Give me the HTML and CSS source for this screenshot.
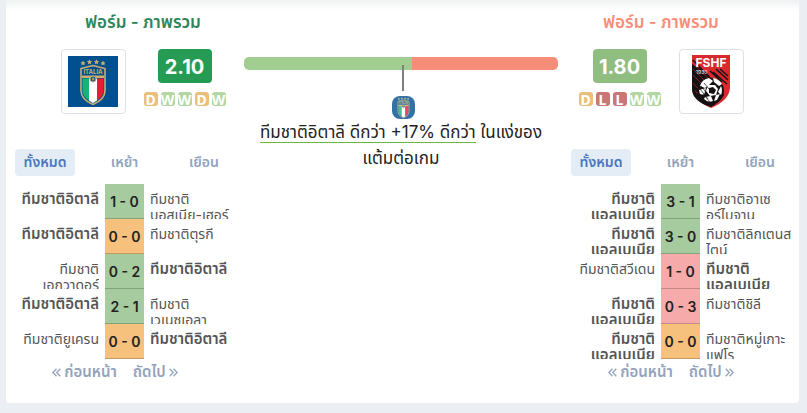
FILE: index.html
```html
<!DOCTYPE html>
<html lang="th">
<head>
    <meta charset="UTF-8">
    <meta name="viewport" content="width=device-width, initial-scale=1.0">
    <title>ฟอร์ม - ภาพรวม</title>
    <link rel="stylesheet" href="styles.css">
</head>
<body>

    <!-- Shared drawings -->
    <svg class="sprite" aria-hidden="true">
        <symbol id="italy" viewBox="0 0 50 50">
            <path d="M13 12 25 9l12 3v22q0 9-12 14Q13 43 13 34z" fill="#00508f" stroke="#c9ae6e" stroke-width="1.6"/>
            <path d="M14.500 22H21v22q-6.500-4-6.500-10z" fill="#14b573"/>
            <path d="M21 22h8v22l-4 2.500-4-2.500z" fill="#fff"/>
            <path d="M29 22h6.500v12q0 6-6.500 10z" fill="#e51d35"/>
            <path d="M14 19h22v2.500H14z" fill="#c9ae6e"/>
            <circle cx="25" cy="22.500" r="3" fill="#17548a" stroke="#c9ae6e"/>
            <path d="M24 22.500h2.500m-1.500-1.500v3" stroke="#c9ae6e"/>
            <text x="25" y="17.500" text-anchor="middle" class="italy-name">ITALIA</text>
            <g fill="#c9ae6e">
                <path id="star" d="m15 4 .8 1.700 1.800.2-1.300 1.300.3 1.800-1.600-.9-1.600.9.300-1.800-1.300-1.300 1.800-.2z"/>
                <use href="#star" x="6.500" y="-1.200"/>
                <use href="#star" x="13.500" y="-1.200"/>
                <use href="#star" x="20"/>
            </g>
        </symbol>
        <symbol id="prev" viewBox="0 0 9 9">
            <path d="M4.500.8.9 4.500l3.600 3.700M8.300.8 4.700 4.500l3.600 3.700" fill="none" stroke="currentColor" stroke-width="1.300"/>
        </symbol>
        <symbol id="next" viewBox="0 0 9 9">
            <path d="m.7.8 3.600 3.700L.7 8.200M4.500.8l3.600 3.700-3.600 3.700" fill="none" stroke="currentColor" stroke-width="1.300"/>
        </symbol>
    </svg>

    <main class="card">
        <section class="team">
            <div class="overview home">
                <h2 class="title">ฟอร์ม - ภาพรวม</h2>
                <div class="summary">
                    <div class="crest">
                        <svg class="crest-italy" viewBox="0 0 50 50" role="img" aria-label="ทีมชาติอิตาลี"><use href="#italy"/></svg>
                    </div>
                    <div class="form">
                        <div class="rating high">2.10</div>
                        <div class="results">
                            <span class="result d">D</span><span class="result w">W</span><span class="result w">W</span><span class="result d">D</span><span class="result w">W</span>
                        </div>
                    </div>
                </div>
            </div>
            <div class="tabs">
                <button class="tab active">ทั้งหมด</button>
                <button class="tab">เหย้า</button>
                <button class="tab">เยือน</button>
            </div>
            <table class="matches">
                <tr><td class="name left"><div><b>ทีมชาติอิตาลี</b></div></td><td class="score win">1 - 0</td><td class="name"><div>ทีมชาติ<br>บอสเนีย-เฮอร์</div></td></tr>
                <tr><td class="name left"><div><b>ทีมชาติอิตาลี</b></div></td><td class="score draw">0 - 0</td><td class="name"><div>ทีมชาติตุรกี</div></td></tr>
                <tr><td class="name left"><div>ทีมชาติ<br>เอกวาดอร์</div></td><td class="score win">0 - 2</td><td class="name"><div><b>ทีมชาติอิตาลี</b></div></td></tr>
                <tr><td class="name left"><div><b>ทีมชาติอิตาลี</b></div></td><td class="score win">2 - 1</td><td class="name"><div>ทีมชาติ<br>เวเนซุเอลา</div></td></tr>
                <tr><td class="name left"><div>ทีมชาติยูเครน</div></td><td class="score draw">0 - 0</td><td class="name"><div><b>ทีมชาติอิตาลี</b></div></td></tr>
            </table>
            <div class="pager">
                <button class="page"><svg class="chevron"><use href="#prev"/></svg>ก่อนหน้า</button>
                <button class="page">ถัดไป<svg class="chevron"><use href="#next"/></svg></button>
            </div>
        </section>

        <section class="compare">
            <div class="bar"><div class="bar-home"></div><div class="bar-away"></div></div>
            <div class="marker">
                <div class="line"></div>
                <svg class="marker-crest" viewBox="0 0 50 50" aria-hidden="true"><use href="#italy"/></svg>
            </div>
            <p class="verdict"><span class="better">ทีมชาติอิตาลี ดีกว่า +17% ดีกว่า</span> ในแง่ของ<br>แต้มต่อเกม</p>
        </section>

        <section class="team">
            <div class="overview away">
                <h2 class="title">ฟอร์ม - ภาพรวม</h2>
                <div class="summary">
                    <div class="form">
                        <div class="rating medium">1.80</div>
                        <div class="results">
                            <span class="result d">D</span><span class="result l">L</span><span class="result l">L</span><span class="result w">W</span><span class="result w">W</span>
                        </div>
                    </div>
                    <div class="crest">
                        <svg class="crest-albania" viewBox="0 0 38 54" role="img" aria-label="ทีมชาติแอลเบเนีย">
                            <path d="M0 0h38v32q0 13-19 21Q0 45 0 32z" fill="#d9292e"/>
                            <path d="M0 16v18q0 12 19 18 8-4 13-12L14 17 0 9z" fill="#151012"/>
                            <path d="m1 5 18 19M0 11l16 15M21 17l14 12M24 14l12 11M28 14l8 7M18 16l12 11" stroke="#151012" stroke-width="1.400"/>
                            <path d="m2 10 15 14M1 20l10 10M1 14l12 12M1 28l14 15M3 36l13 11" stroke="#d9292e" stroke-width=".6"/>
                            <circle cx="19" cy="36" r="13" fill="#151012"/>
                            <path d="M8 31q2-7 9-8l4 3-5 5-3 2zM21 23q6 1 9 6l-3 2-5-4zM29 31q2 4 0 9l-3-3zM14 33l-2 7-4-1-1-4zM13 42l6-1 2 5q-5 2-9-2zM24 40l4-1-3 6-3 1zM16 30h7l3 4-2 6-6 1-4-5z" fill="#fff"/>
                            <path d="m17 33 4-1 3 3-2 4-5-1z" fill="#151012"/>
                            <path d="m8 34 8 10M9 31l8 10M12 28l5 6M11 39l7 8" stroke="#151012" stroke-width=".7"/>
                            <text x="19" y="12" text-anchor="middle" class="fshf">FSHF</text>
                            <text x="4" y="19" class="year">1930</text>
                        </svg>
                    </div>
                </div>
            </div>
            <div class="tabs">
                <button class="tab active">ทั้งหมด</button>
                <button class="tab">เหย้า</button>
                <button class="tab">เยือน</button>
            </div>
            <table class="matches">
                <tr><td class="name left"><div><b>ทีมชาติ<br>แอลเบเนีย</b></div></td><td class="score win">3 - 1</td><td class="name"><div>ทีมชาติอาเซ<br>อร์ไบจาน</div></td></tr>
                <tr><td class="name left"><div><b>ทีมชาติ<br>แอลเบเนีย</b></div></td><td class="score win">3 - 0</td><td class="name"><div>ทีมชาติลิกเตนส<br>ไตน์</div></td></tr>
                <tr><td class="name left"><div>ทีมชาติสวีเดน</div></td><td class="score loss">1 - 0</td><td class="name"><div><b>ทีมชาติ<br>แอลเบเนีย</b></div></td></tr>
                <tr><td class="name left"><div><b>ทีมชาติ<br>แอลเบเนีย</b></div></td><td class="score loss">0 - 3</td><td class="name"><div>ทีมชาติชิลี</div></td></tr>
                <tr><td class="name left"><div><b>ทีมชาติ<br>แอลเบเนีย</b></div></td><td class="score draw">0 - 0</td><td class="name"><div>ทีมชาติหมู่เกาะ<br>แฟโร</div></td></tr>
            </table>
            <div class="pager">
                <button class="page"><svg class="chevron"><use href="#prev"/></svg>ก่อนหน้า</button>
                <button class="page">ถัดไป<svg class="chevron"><use href="#next"/></svg></button>
            </div>
        </section>
    </main>

</body>
</html>
```
FILE: styles.css
```css
* {
    box-sizing: border-box;
}

body {
    margin: 0;
    padding: 0 8px 9px 6px;
    background: #ebeff3;
    color: #222;
    font-family: Inter, "Noto Sans Thai", "Noto Sans", sans-serif;
}

.sprite {
    display: none;
}

.card {
    display: grid;
    grid-template-columns: 228fr 328fr 228fr;
    padding: 0 0 20px 9px;
    background: linear-gradient(#eff1f2, #fff 10px);
    border-radius: 0 0 4px 4px;
}

.overview.home {
    padding-left: 28px;
    color: #2d8659;
}

.overview.away {
    padding-right: 48px;
    color: #f78d78;
}

.title {
    margin: 11px 0 0;
    height: 38px;
    font-size: 17px;
    line-height: 22px;
    font-weight: 600;
    text-align: center;
}

.summary {
    display: flex;
    justify-content: center;
    gap: 18px;
}

.crest {
    display: flex;
    align-items: center;
    justify-content: center;
    width: 65px;
    height: 65px;
    border: 1px solid #dfe0e7;
    border-radius: 4px;
}

.crest-italy {
    width: 50px;
    height: 51px;
    background: #00508f;
}

.crest-albania {
    width: 38px;
    height: 54px;
}

.italy-name {
    font-size: 6px;
    font-weight: 700;
    fill: #c9ae6e;
}

.fshf {
    font-size: 12px;
    font-weight: 700;
    fill: #fff;
}

.year {
    font-size: 5px;
    fill: #fff;
}

.form {
    display: flex;
    flex-direction: column;
    align-items: center;
}

.rating {
    width: 54px;
    height: 34px;
    border-radius: 4px;
    color: #fff;
    font-size: 20px;
    line-height: 36px;
    font-weight: 700;
    text-align: center;
}

.rating.high {
    background: #259b54;
}

.rating.medium {
    background: #90bd80;
}

.results {
    display: flex;
    gap: 3px;
    margin-top: 9px;
}

.result {
    display: flex;
    justify-content: center;
    width: 14px;
    height: 14px;
    border-radius: 3px;
    color: #fff;
    font-family: "Noto Sans", sans-serif;
    font-size: 14px;
    line-height: 16px;
    font-weight: 700;
}

.result.w {
    background: #b3d6a3;
}

.result.d {
    background: #e9bf7b;
}

.result.l {
    background: #c97777;
}

.tabs {
    display: grid;
    grid-template-columns: repeat(3, 60px);
    justify-content: space-between;
    width: 219px;
    margin-top: 35px;
}

.tab,
.page {
    border: 0;
    padding: 0;
    background: none;
    color: #93a3bd;
    font-family: inherit;
    font-size: 14px;
    font-weight: 600;
    white-space: nowrap;
}

.tab {
    height: 27px;
    border-radius: 4px;
}

.tab.active {
    background: #e4ecf6;
    color: #4977bf;
}

.matches {
    width: 100%;
    margin-top: 8px;
    border-collapse: collapse;
    table-layout: fixed;
}

.name {
    height: 35px;
    padding: 0 0 0 6px;
    vertical-align: top;
    color: #555;
    font-size: 14px;
    line-height: 16px;
}

.name.left {
    width: 90px;
    padding: 0 6px 0 0;
    text-align: right;
}

.name div {
    height: 35px;
    padding-top: 7px;
    overflow: hidden;
    white-space: nowrap;
}

.name b {
    font-size: 15px;
    font-weight: 600;
}

.score {
    width: 39px;
    padding: 0;
    font-size: 14px;
    font-weight: 600;
    text-align: center;
    box-shadow: inset 0 -1px rgba(0, 0, 0, 0.2);
}

.score.win {
    background: #a6cb9e;
}

.score.draw {
    background: #f6c07d;
}

.score.loss {
    background: #f6abaa;
}

.pager {
    display: flex;
    justify-content: center;
    gap: 16px;
    width: 200px;
    margin-top: 2px;
}

.page {
    display: flex;
    align-items: center;
    gap: 3px;
    height: 22px;
    font-size: 15px;
}

.chevron {
    width: 9px;
    height: 9px;
}

.compare {
    padding: 57px 13px 0 1px;
}

.bar {
    display: flex;
    height: 13px;
    border-radius: 5px;
    overflow: hidden;
}

.bar-home {
    width: 53.5%;
    background: #a1cd90;
}

.bar-away {
    flex: 1;
    background: #f58d78;
}

/* The line starts inside the bar */
.marker {
    display: flex;
    flex-direction: column;
    align-items: center;
    gap: 5px;
    margin-top: -5px;
    padding-left: 4px;
    position: relative;
}

.line {
    width: 2px;
    height: 26px;
    background: #808080;
}

.marker-crest {
    width: 23px;
    height: 23px;
    border-radius: 8px;
    background: #00508f;
    opacity: 0.8;
}

.verdict {
    margin: 0;
    font-size: 17px;
    line-height: 26px;
    text-align: center;
    white-space: nowrap;
}

.better {
    border-bottom: 1px solid #6fb43f;
}
```
